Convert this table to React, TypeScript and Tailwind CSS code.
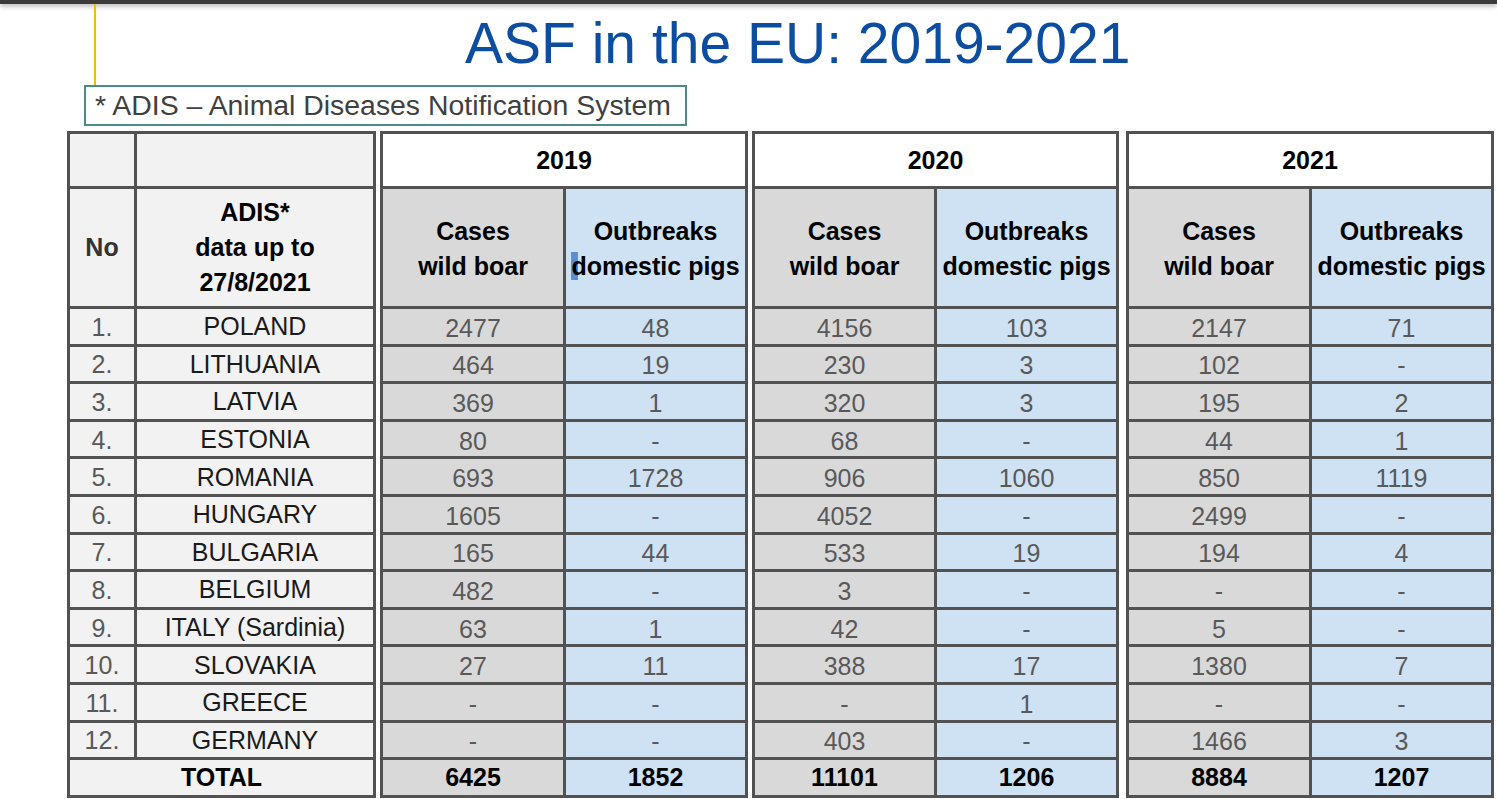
const rows: [string, string, string[]][] = [
  ["1.", "POLAND", ["2477", "48", "4156", "103", "2147", "71"]],
  ["2.", "LITHUANIA", ["464", "19", "230", "3", "102", "-"]],
  ["3.", "LATVIA", ["369", "1", "320", "3", "195", "2"]],
  ["4.", "ESTONIA", ["80", "-", "68", "-", "44", "1"]],
  ["5.", "ROMANIA", ["693", "1728", "906", "1060", "850", "1119"]],
  ["6.", "HUNGARY", ["1605", "-", "4052", "-", "2499", "-"]],
  ["7.", "BULGARIA", ["165", "44", "533", "19", "194", "4"]],
  ["8.", "BELGIUM", ["482", "-", "3", "-", "-", "-"]],
  ["9.", "ITALY (Sardinia)", ["63", "1", "42", "-", "5", "-"]],
  ["10.", "SLOVAKIA", ["27", "11", "388", "17", "1380", "7"]],
  ["11.", "GREECE", ["-", "-", "-", "1", "-", "-"]],
  ["12.", "GERMANY", ["-", "-", "403", "-", "1466", "3"]],
];

const years = [
  { year: "2019", cols: "grid-cols-[180px_179px]", gap: "ml-[4px]", total: ["6425", "1852"], mark: true },
  { year: "2020", cols: "grid-cols-[179px_179px]", gap: "ml-[4px]", total: ["11101", "1206"], mark: false },
  { year: "2021", cols: "grid-cols-[180px_179px]", gap: "ml-[7px]", total: ["8884", "1207"], mark: false },
];

const block = "grid grid-rows-[52px_117px_repeat(13,34.6px)] gap-[3px] p-[3px] bg-[#525252]";
const cell = "flex items-center justify-center";

function CountryBlock() {
  return (
    <div className={`${block} grid-cols-[64px_236px]`}>
      <div className="bg-[#f2f2f2]" />
      <div className="bg-[#f2f2f2]" />
      <div className={`${cell} bg-[#f2f2f2] font-bold text-[#333]`}>No</div>
      <div className={`${cell} bg-[#f2f2f2] flex-col font-bold leading-[35px] text-black`}>
        <span>ADIS*</span>
        <span>data up to</span>
        <span>27/8/2021</span>
      </div>
      {rows.map(([no, name]) => (
        <div key={no} className="contents">
          <div className={`${cell} bg-[#f2f2f2] text-[#595959] pt-[2px]`}>{no}</div>
          <div className={`${cell} bg-[#f2f2f2] text-[#1a1a1a] pt-[1px]`}>{name}</div>
        </div>
      ))}
      <div className={`${cell} col-span-2 bg-[#f2f2f2] font-bold text-black`}>TOTAL</div>
    </div>
  );
}

function YearBlock({ idx }: { idx: number }) {
  const y = years[idx];
  return (
    <div className={`${block} ${y.cols} ${y.gap}`}>
      <div className={`${cell} col-span-2 bg-white font-bold text-black`}>{y.year}</div>
      <div className={`${cell} flex-col bg-[#d9d9d9] font-bold leading-[35px] text-black pt-[3px]`}>
        <span>Cases</span>
        <span>wild boar</span>
      </div>
      <div className={`${cell} flex-col bg-[#cfe2f3] font-bold leading-[35px] text-black pt-[3px]`}>
        <span>Outbreaks</span>
        <span>
          {y.mark ? (
            <span className="bg-[linear-gradient(90deg,#5b8fd2_45%,transparent_45%)]">d</span>
          ) : (
            "d"
          )}
          omestic pigs
        </span>
      </div>
      {rows.map(([no, , vals]) => (
        <div key={no} className="contents">
          <div className={`${cell} bg-[#d9d9d9] text-[#595959] pt-[4px]`}>{vals[idx * 2]}</div>
          <div className={`${cell} bg-[#cfe2f3] text-[#595959] pt-[4px]`}>{vals[idx * 2 + 1]}</div>
        </div>
      ))}
      <div className={`${cell} bg-[#d9d9d9] font-bold text-black pt-[1px]`}>{y.total[0]}</div>
      <div className={`${cell} bg-[#cfe2f3] font-bold text-black pt-[1px]`}>{y.total[1]}</div>
    </div>
  );
}

export default function App() {
  return (
    <div className="w-[1497px] h-[799px] overflow-hidden bg-white font-['Liberation_Sans',Arial,sans-serif]">
      <div className="h-[4px] bg-[#3a3a3a] shadow-[0_2px_5px_rgba(0,0,0,0.35)]" />
      <div className="flex h-[81px]">
        <div className="ml-[94px] w-[2px] bg-[#f7bd00]" />
        <h1 className="ml-[369px] mt-[11px] text-[57px] leading-[57px] text-[#0c4da2]">
          ASF in the EU: 2019-2021
        </h1>
      </div>
      <div className="ml-[84px] w-[603px] h-[41px] border-2 border-[#4b8b8b] flex items-center pl-[9px] text-[28.4px] text-[#404040]">
        * ADIS – Animal Diseases Notification System
      </div>
      <div className="mt-[5px] ml-[67px] flex text-[25px] leading-none">
        <CountryBlock />
        <YearBlock idx={0} />
        <YearBlock idx={1} />
        <YearBlock idx={2} />
      </div>
    </div>
  );
}
